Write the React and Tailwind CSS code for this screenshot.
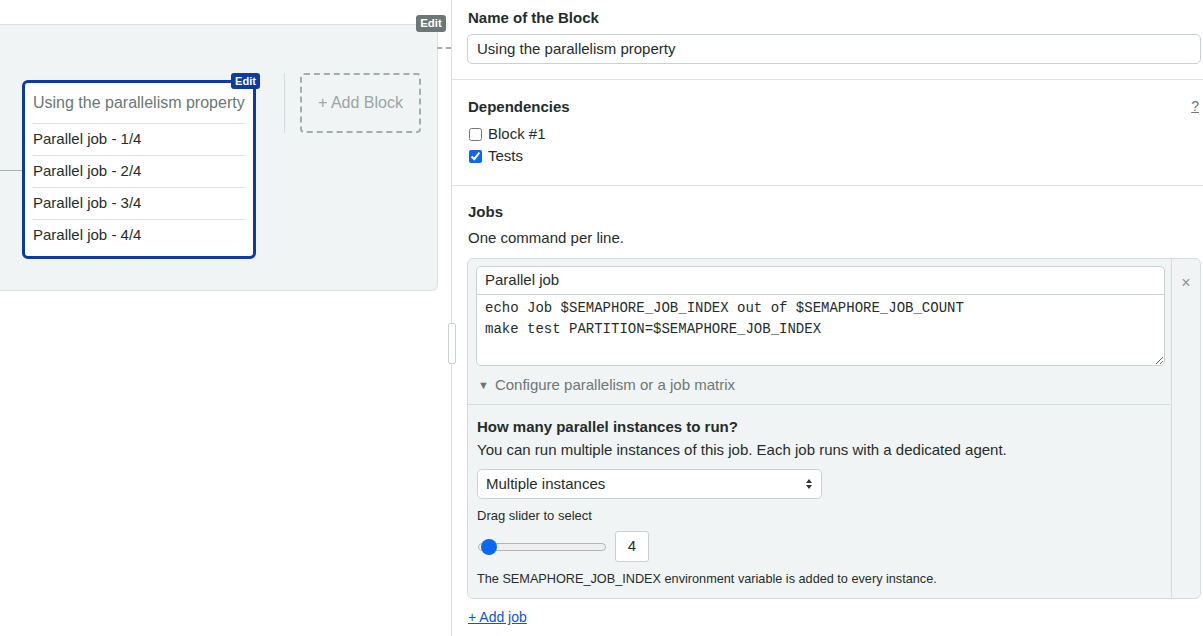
export default function App() {
  const jobs = ['Parallel job - 1/4', 'Parallel job - 2/4', 'Parallel job - 3/4', 'Parallel job - 4/4'];

  return (
    <div className="relative flex h-screen w-full overflow-hidden bg-white font-['Liberation_Sans',Arial,sans-serif] text-[#1f2d2d]">
      {/* Workflow canvas */}
      <div className="w-[452px] shrink-0 border-r border-[#dbe1e1]">
        <div className="relative mt-[24px] h-[267px] w-[438px] rounded-br-md border-t border-r border-b border-[#dbe1e1] bg-[#f1f4f4]">
          <span className="absolute top-[-10px] right-[-9px] flex h-[17px] w-[30px] items-center justify-center rounded-[3px] bg-[#6b7878] text-[11.5px] font-bold text-white">
            Edit
          </span>
          <div className="absolute top-[22px] left-full w-[14px] border-t-2 border-dashed border-[#a3adad]" />

          <div className="flex items-start pt-[48px]">
            <div className="mt-[97px] h-px w-[22px] bg-[#a9b2b2]" />

            {/* Block card */}
            <div className="relative mt-[7px] w-[234px] rounded-[6px] border-[3px] border-[#0d3ba3] bg-white px-2 pb-[5px]">
              <span className="absolute top-[-10px] right-[-7px] flex h-[16px] w-[29px] items-center justify-center rounded-[3px] bg-[#0d3ba3] text-[11px] font-bold text-white">
                Edit
              </span>
              <div className="flex h-[40px] items-center text-[16px] text-[#6b7878]">
                Using the parallelism property
              </div>
              {jobs.map((job) => (
                <div key={job} className="flex h-[32px] items-center border-t border-[#dbe1e1] text-[15px]">
                  {job}
                </div>
              ))}
            </div>

            <div className="ml-[28px] h-[60px] w-px bg-[#d5dcdc]" />

            <div className="ml-[15px] flex h-[60px] w-[121px] items-center justify-center rounded-[4px] border-2 border-dashed border-[#a3adad] text-[16px] text-[#9aa5a5]">
              + Add Block
            </div>
          </div>
        </div>
      </div>

      {/* splitter handle */}
      <div className="absolute top-[323px] left-[448px] h-[41px] w-[8px] rounded-[2px] border border-[#c9d1d1] bg-white" />

      {/* Block editor */}
      <div className="min-w-0 flex-1">
        <div className="border-b border-[#dbe1e1] pt-2 pr-[2px] pb-[15px] pl-[15px]">
          <div className="ml-px text-[15px] leading-5 font-bold">Name of the Block</div>
          <div className="mt-[6px] flex h-[30px] items-center rounded-[5px] border border-[#c9d1d1] px-[9px] text-[15px]">
            Using the parallelism property
          </div>
        </div>

        <div className="border-b border-[#dbe1e1] pt-[16px] pr-[4px] pb-[18px] pl-[16px]">
          <div className="flex items-center justify-between">
            <div className="text-[15px] leading-5 font-bold">Dependencies</div>
            <span className="text-[14px] text-[#6b7878] underline">?</span>
          </div>
          <div className="mt-[6px]">
            <label className="flex h-[22px] items-center gap-[6px] text-[15px]">
              <input type="checkbox" readOnly className="m-0 ml-px h-[13px] w-[13px]" />
              Block #1
            </label>
            <label className="flex h-[22px] items-center gap-[6px] text-[15px]">
              <input type="checkbox" readOnly checked className="m-0 ml-px h-[13px] w-[13px] accent-[#0a67f2]" />
              Tests
            </label>
          </div>
        </div>

        <div className="pt-[16px] pr-[2px] pl-[15px]">
          <div className="ml-px text-[15px] leading-5 font-bold">Jobs</div>
          <div className="mt-[6px] ml-px text-[15px] leading-5">One command per line.</div>

          <div className="mt-[10px] flex rounded-md border border-[#d5dcdc] bg-[#f1f4f4]">
            <div className="min-w-0 flex-1">
              <div className="pt-[7px] pr-[6px] pl-[8px]">
                <div className="overflow-hidden rounded-[5px] border border-[#c9d1d1] bg-white">
                  <div className="flex h-[28px] items-center border-b border-[#c9d1d1] px-2 text-[15px]">Parallel job</div>
                  <textarea
                    readOnly
                    defaultValue={'echo Job $SEMAPHORE_JOB_INDEX out of $SEMAPHORE_JOB_COUNT\nmake test PARTITION=$SEMAPHORE_JOB_INDEX'}
                    className="block h-[70px] w-full resize-y overflow-hidden px-2 pt-[3px] font-['Liberation_Mono',monospace] text-[14px] leading-[21px] text-[#1f2d2d] outline-none"
                  />
                </div>
              </div>
              <div className="flex h-[39px] items-center gap-[6px] border-b border-[#d5dcdc] pl-[10px] text-[15px] text-[#6b7878]">
                <span className="text-[11px]">▼</span>
                Configure parallelism or a job matrix
              </div>

              <div className="pt-[12px] pb-[10px] pl-[9px]">
                <div className="text-[15px] leading-5 font-bold">How many parallel instances to run?</div>
                <div className="mt-[3px] text-[15px] leading-5">
                  You can run multiple instances of this job. Each job runs with a dedicated agent.
                </div>
                <div className="mt-[9px] flex h-[30px] w-[345px] items-center justify-between rounded-[5px] border border-[#c9d1d1] bg-white pr-[8px] pl-[8px] text-[15px]">
                  Multiple instances
                  <svg width="8" height="12" viewBox="0 0 8 12" className="text-[#333]">
                    <path d="M4 1 L7 5 H1 Z M4 11 L7 7 H1 Z" fill="currentColor" />
                  </svg>
                </div>
                <div className="mt-[8px] text-[13px] leading-[18px]">Drag slider to select</div>
                <div className="mt-[6px] flex items-center">
                  <div className="relative ml-px h-[8px] w-[128px] rounded-full border border-[#b5b5b5] bg-[#efefef]">
                    <div className="absolute top-1/2 left-[2px] h-[16px] w-[16px] -translate-y-1/2 rounded-full bg-[#0a67f2]" />
                  </div>
                  <div className="ml-[9px] flex h-[31px] w-[34px] items-center justify-center rounded-[3px] border border-[#c9d1d1] bg-white text-[15px]">
                    4
                  </div>
                </div>
                <div className="mt-[8px] text-[12.7px] leading-[18px]">
                  The SEMAPHORE_JOB_INDEX environment variable is added to every instance.
                </div>
              </div>
            </div>
            <div className="flex w-[29px] shrink-0 justify-center border-l border-[#d5dcdc] pt-[12px] text-[16px] text-[#8a9595]">
              ×
            </div>
          </div>

          <a href="#" className="mt-[8px] ml-px inline-block text-[14px] leading-5 text-[#0b57d0] underline">
            + Add job
          </a>
        </div>
      </div>
    </div>
  );
}
